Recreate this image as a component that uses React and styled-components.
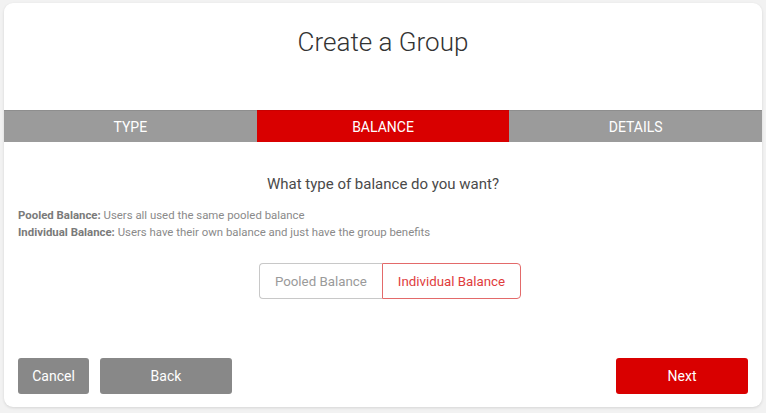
import React, { useState } from "react";
import styled, { createGlobalStyle } from "styled-components";

const GlobalStyle = createGlobalStyle`
  html, body {
    margin: 0;
    padding: 0;
    background: #f2f2f2;
    font-family: Roboto, "Liberation Sans", Arial, sans-serif;
  }
`;

const Page = styled.div`
  padding: 3px 4px 6px 4px;
`;

const Card = styled.div`
  background: #ffffff;
  border-radius: 9px;
  box-shadow: 0 1px 3px rgba(0, 0, 0, 0.12);
  height: 404px;
  display: flex;
  flex-direction: column;
  overflow: hidden;
`;

const Title = styled.h1`
  margin: 0;
  height: 107px;
  padding-top: 24px;
  box-sizing: border-box;
  text-align: center;
  font-size: 26px;
  font-weight: 300;
  color: #333;
`;

const Tabs = styled.div`
  display: grid;
  grid-template-columns: 1fr 1fr 1fr;
  height: 32px;
`;

const Tab = styled.div`
  display: flex;
  align-items: center;
  justify-content: center;
  background: ${(p) => (p.$active ? "#d90000" : "#9b9b9b")};
  border-top: 1px solid ${(p) => (p.$active ? "#c80000" : "#8e8e8e")};
  color: #fff;
  font-size: 14px;
  text-transform: uppercase;
`;

const Body = styled.div`
  flex: 1;
  display: flex;
  flex-direction: column;
  padding: 0 14px 13px 14px;
`;

const Question = styled.p`
  margin: 33px 0 14px 0;
  text-align: center;
  font-size: 15px;
  color: #4a4a4a;
`;

const Note = styled.p`
  margin: 0;
  font-size: 11.4px;
  line-height: 17px;
  color: #8a8a8a;
  & > b {
    font-weight: 700;
    color: #7a7a7a;
  }
`;

const Toggle = styled.div`
  display: flex;
  justify-content: center;
  margin-top: 22px;
  padding-left: 14px;
`;

const ToggleButton = styled.button`
  height: 36px;
  padding: 0 15px;
  font-family: inherit;
  font-size: 13.3px;
  background: #fff;
  cursor: pointer;
  color: ${(p) => (p.$active ? "#e03c3c" : "#9a9a9a")};
  border: 1px solid ${(p) => (p.$active ? "#e36a6a" : "#c8c8c8")};
  border-radius: ${(p) => (p.$first ? "4px 0 0 4px" : "0 4px 4px 0")};
  ${(p) => (p.$first ? "border-right: none;" : "")}
`;

const Footer = styled.div`
  margin-top: auto;
  display: flex;
  gap: 11px;
`;

const Button = styled.button`
  height: 36px;
  width: ${(p) => p.$w}px;
  border: none;
  border-radius: 3px;
  font-family: inherit;
  font-size: 14px;
  color: #fff;
  background: ${(p) => (p.$primary ? "#d90000" : "#888888")};
  margin-left: ${(p) => (p.$push ? "auto" : "0")};
  cursor: pointer;
`;

export default function App() {
  const [balance, setBalance] = useState("individual");
  return (
    <>
      <GlobalStyle />
      <Page>
        <Card>
          <Title>Create a Group</Title>
          <Tabs>
            <Tab>Type</Tab>
            <Tab $active>Balance</Tab>
            <Tab>Details</Tab>
          </Tabs>
          <Body>
            <Question>What type of balance do you want?</Question>
            <Note>
              <b>Pooled Balance:</b> Users all used the same pooled balance
            </Note>
            <Note>
              <b>Individual Balance:</b> Users have their own balance and just
              have the group benefits
            </Note>
            <Toggle>
              <ToggleButton
                $first
                $active={balance === "pooled"}
                onClick={() => setBalance("pooled")}
              >
                Pooled Balance
              </ToggleButton>
              <ToggleButton
                $active={balance === "individual"}
                onClick={() => setBalance("individual")}
              >
                Individual Balance
              </ToggleButton>
            </Toggle>
            <Footer>
              <Button $w={71}>Cancel</Button>
              <Button $w={132}>Back</Button>
              <Button $w={132} $primary $push>
                Next
              </Button>
            </Footer>
          </Body>
        </Card>
      </Page>
    </>
  );
}
